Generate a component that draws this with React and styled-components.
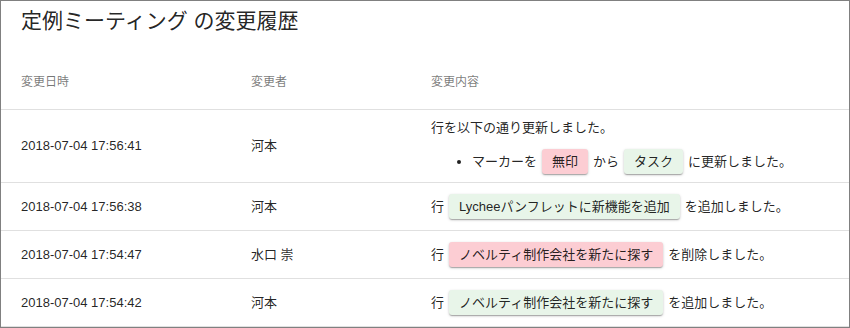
import React from 'react'
import styled, { createGlobalStyle } from 'styled-components'

const GlobalStyle = createGlobalStyle`
  html, body {
    margin: 0;
    padding: 0;
    background: #fff;
  }
  body {
    font-family: "Liberation Sans", "Noto Sans CJK JP", sans-serif;
    color: rgba(0, 0, 0, 0.87);
  }
`

const Frame = styled.div`
  width: 850px;
  height: 328px;
  box-sizing: border-box;
  border: 1px solid #808080;
  overflow: hidden;
  background: #fff;
`

const Title = styled.h2`
  margin: 0;
  height: 53px;
  box-sizing: border-box;
  padding: 8px 20px 0;
  font-size: 21px;
  line-height: 24px;
  font-weight: 400;
  color: rgba(0, 0, 0, 0.87);
`

const Row = styled.div`
  display: grid;
  grid-template-columns: 230px 180px 1fr;
  align-items: center;
  min-height: ${(p) => (p.$head ? '55px' : '47px')};
  border-bottom: 1px solid #e0e0e0;
  font-size: ${(p) => (p.$head ? '12px' : '13px')};
  color: ${(p) => (p.$head ? 'rgba(0, 0, 0, 0.54)' : 'rgba(0, 0, 0, 0.87)')};
`

const Cell = styled.div`
  padding: 0 20px;
  line-height: 20px;
`

const ChangeCell = styled.div`
  padding: ${(p) => (p.$multi ? '8px 20px 8px' : '0 20px')};
  line-height: 25px;
`

const Lead = styled.p`
  margin: 0;
  line-height: 20px;
`

const List = styled.ul`
  margin: 11px 0 0;
  padding-left: 41px;
  line-height: 25px;
`

const Chip = styled.span`
  display: inline-block;
  margin: 0 5px;
  padding: 0 10px;
  height: 25px;
  line-height: 25px;
  border-radius: 3px;
  background: ${(p) => (p.$kind === 'del' ? '#fccdd3' : '#e8f5e9')};
  box-shadow: 0 1px 3px rgba(0, 0, 0, 0.2), 0 1px 1px rgba(0, 0, 0, 0.14),
    0 2px 1px -1px rgba(0, 0, 0, 0.12);
  vertical-align: top;
`

const history = [
  { date: '2018-07-04 17:56:38', user: '河本', row: 'Lycheeパンフレットに新機能を追加', kind: 'add', verb: 'を追加しました。' },
  { date: '2018-07-04 17:54:47', user: '水口 崇', row: 'ノベルティ制作会社を新たに探す', kind: 'del', verb: 'を削除しました。' },
  { date: '2018-07-04 17:54:42', user: '河本', row: 'ノベルティ制作会社を新たに探す', kind: 'add', verb: 'を追加しました。' },
]

const App = () => {
  return (
    <Frame>
      <GlobalStyle />
      <Title>定例ミーティング の変更履歴</Title>
      <Row $head>
        <Cell>変更日時</Cell>
        <Cell>変更者</Cell>
        <Cell>変更内容</Cell>
      </Row>
      <Row>
        <Cell>2018-07-04 17:56:41</Cell>
        <Cell>河本</Cell>
        <ChangeCell $multi>
          <Lead>行を以下の通り更新しました。</Lead>
          <List>
            <li>
              マーカーを<Chip $kind="del">無印</Chip>から<Chip $kind="add">タスク</Chip>に更新しました。
            </li>
          </List>
        </ChangeCell>
      </Row>
      {history.map((h, i) => (
        <Row key={i}>
          <Cell>{h.date}</Cell>
          <Cell>{h.user}</Cell>
          <ChangeCell>
            行<Chip $kind={h.kind}>{h.row}</Chip>{h.verb}
          </ChangeCell>
        </Row>
      ))}
    </Frame>
  )
}

export default App
